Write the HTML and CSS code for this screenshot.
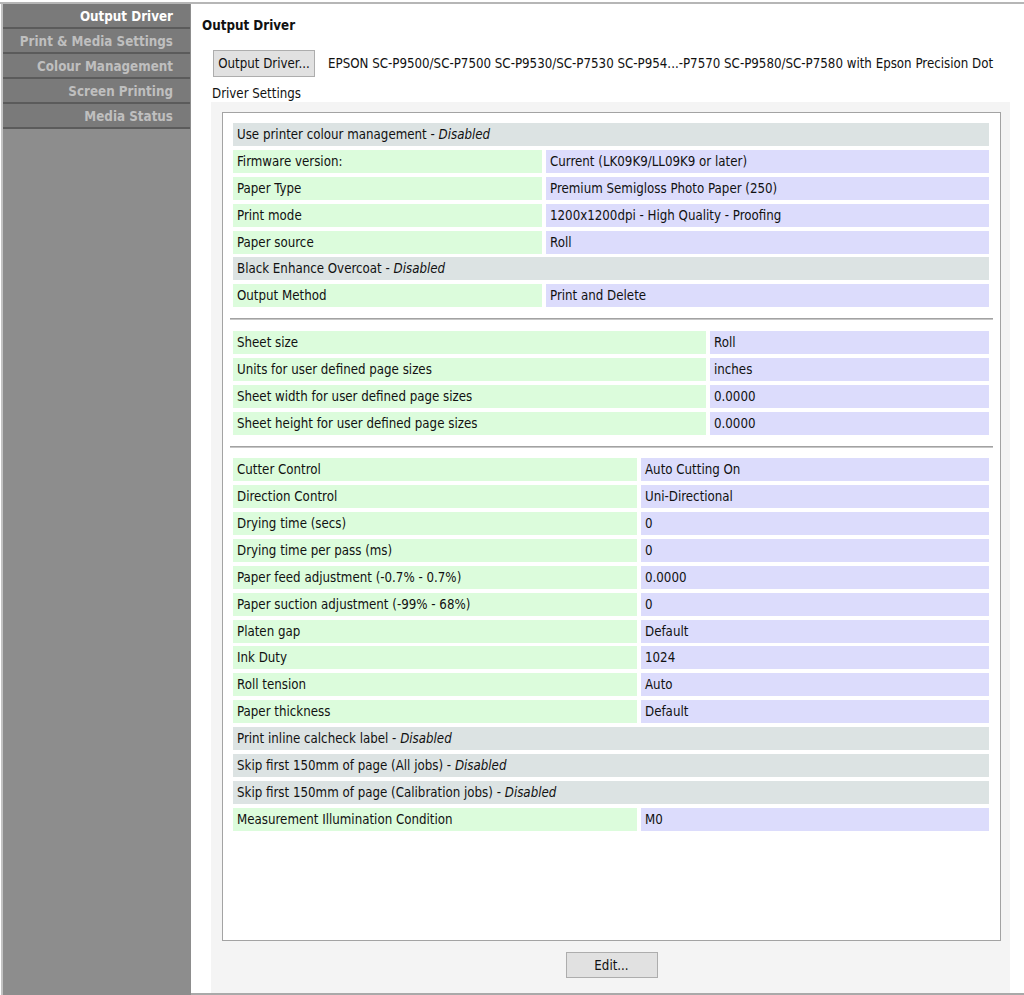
FILE: index.html
```html
<!DOCTYPE html>
<html lang="en">
<head>
<meta charset="utf-8">
<title>Output Driver</title>
<link rel="stylesheet" href="styles.css">
</head>
<body>
<div class="window">
  <nav class="sidebar">
    <div class="tab active">Output Driver</div>
    <div class="tab">Print &amp; Media Settings</div>
    <div class="tab">Colour Management</div>
    <div class="tab">Screen Printing</div>
    <div class="tab">Media Status</div>
  </nav>
  <main class="main">
    <h1 class="title">Output Driver</h1>
    <div class="content">
      <div class="driver-row">
        <button class="btn driver-btn">Output Driver...</button>
        <span class="driver-name">EPSON SC-P9500/SC-P7500 SC-P9530/SC-P7530 SC-P954...-P7570 SC-P9580/SC-P7580 with Epson Precision Dot</span>
      </div>
      <div class="settings-label">Driver Settings</div>
      <div class="panel">
        <div class="box">
          <div class="section s1">
            <div class="cell full">Use printer colour management - <i>Disabled</i></div>
            <div class="cell label">Firmware version:</div><div class="cell value">Current (LK09K9/LL09K9 or later)</div>
            <div class="cell label">Paper Type</div><div class="cell value">Premium Semigloss Photo Paper (250)</div>
            <div class="cell label">Print mode</div><div class="cell value">1200x1200dpi - High Quality - Proofing</div>
            <div class="cell label">Paper source</div><div class="cell value">Roll</div>
            <div class="cell full">Black Enhance Overcoat - <i>Disabled</i></div>
            <div class="cell label">Output Method</div><div class="cell value">Print and Delete</div>
          </div>
          <div class="sep"></div>
          <div class="section s2">
            <div class="cell label">Sheet size</div><div class="cell value">Roll</div>
            <div class="cell label">Units for user defined page sizes</div><div class="cell value">inches</div>
            <div class="cell label">Sheet width for user defined page sizes</div><div class="cell value">0.0000</div>
            <div class="cell label">Sheet height for user defined page sizes</div><div class="cell value">0.0000</div>
          </div>
          <div class="sep"></div>
          <div class="section s3">
            <div class="cell label">Cutter Control</div><div class="cell value">Auto Cutting On</div>
            <div class="cell label">Direction Control</div><div class="cell value">Uni-Directional</div>
            <div class="cell label">Drying time (secs)</div><div class="cell value">0</div>
            <div class="cell label">Drying time per pass (ms)</div><div class="cell value">0</div>
            <div class="cell label">Paper feed adjustment (-0.7% - 0.7%)</div><div class="cell value">0.0000</div>
            <div class="cell label">Paper suction adjustment (-99% - 68%)</div><div class="cell value">0</div>
            <div class="cell label">Platen gap</div><div class="cell value">Default</div>
            <div class="cell label">Ink Duty</div><div class="cell value">1024</div>
            <div class="cell label">Roll tension</div><div class="cell value">Auto</div>
            <div class="cell label">Paper thickness</div><div class="cell value">Default</div>
            <div class="cell full">Print inline calcheck label - <i>Disabled</i></div>
            <div class="cell full">Skip first 150mm of page (All jobs) - <i>Disabled</i></div>
            <div class="cell full">Skip first 150mm of page (Calibration jobs) - <i>Disabled</i></div>
            <div class="cell label">Measurement Illumination Condition</div><div class="cell value">M0</div>
          </div>
        </div>
        <div class="actions">
          <button class="btn edit-btn">Edit...</button>
        </div>
      </div>
    </div>
  </main>
</div>
</body>
</html>
```
FILE: styles.css
```css
* { box-sizing: border-box; }
html, body { margin: 0; padding: 0; background: #ffffff; }
body {
  font-family: "DejaVu Sans Condensed", "DejaVu Sans", sans-serif;
  font-stretch: condensed;
  font-size: 13.2px;
  color: #111111;
}
.window {
  margin-top: 2px;
  height: 993px;
  display: flex;
  border-top: 2px solid #b6b6b6;
}
.sidebar {
  width: 190px;
  flex: none;
  margin-left: 1px;
  border-left: 2px solid #c2c2c2;
  background: #8d8d8d;
}
.tab {
  height: 25px;
  padding-top: 3px;
  line-height: 20px;
  background: #7a7a7a;
  border-bottom: 2px solid #5b5b5b;
  text-align: right;
  padding-right: 17px;
  margin-right: 1px;
  font-weight: bold;
  font-size: 13.3px;
  color: #bfbfbf;
  white-space: nowrap;
}
.tab.active { color: #ffffff; }
.main {
  flex: 1;
  display: flex;
  flex-direction: column;
  border-bottom: 2px solid #a9a9a9;
  min-width: 0;
}
.title {
  margin: 0;
  padding: 13px 0 0 11px;
  font-size: 13.3px;
  line-height: 18px;
  font-weight: bold;
  color: #111111;
}
.content {
  flex: 1;
  display: flex;
  flex-direction: column;
  padding: 0 14px 0 20px;
}
.driver-row {
  margin-top: 15px;
  display: flex;
  align-items: center;
  padding-left: 2px;
  white-space: nowrap;
}
.btn {
  font-family: "DejaVu Sans Condensed", "DejaVu Sans", sans-serif;
  font-stretch: condensed;
  font-size: 13.2px;
  color: #111111;
  background: #e1e1e1;
  border: 1px solid #adadad;
  padding: 0;
  margin: 0;
}
.driver-btn {
  width: 102px;
  height: 27px;
}
.driver-name {
  margin-left: 13px;
}
.settings-label {
  margin-top: 9px;
  line-height: 16px;
  padding-left: 1px;
}
.panel {
  flex: 1;
  display: flex;
  flex-direction: column;
  background: #f4f4f4;
  padding: 10px 9px 0 11px;
}
.box {
  flex: 1;
  background: #ffffff;
  border: 1px solid #a3a3a3;
  padding: 10px 11px 0 10px;
}
.section {
  display: grid;
  column-gap: 4px;
  row-gap: 3.9px;
}
.s1 { grid-template-columns: 309px 1fr; }
.s2 { grid-template-columns: 473px 1fr; }
.s3 { grid-template-columns: 404px 1fr; }
.cell {
  height: 23px;
  padding-top: 1px;
  line-height: 22px;
  padding-left: 4px;
  white-space: nowrap;
  overflow: hidden;
}
.full { grid-column: 1 / -1; background: #dce3e3; }
.label { background: #dcfcdc; }
.value { background: #dcdcfc; }
.sep {
  height: 2px;
  margin: 11px -4px 10.6px -3px;
  border-top: 1px solid #a2a2a2;
  border-bottom: 1px solid #c6c6c6;
}
.actions {
  padding: 11px 0 15px;
  display: flex;
  justify-content: center;
}
.edit-btn {
  width: 92px;
  height: 26px;
}
```
